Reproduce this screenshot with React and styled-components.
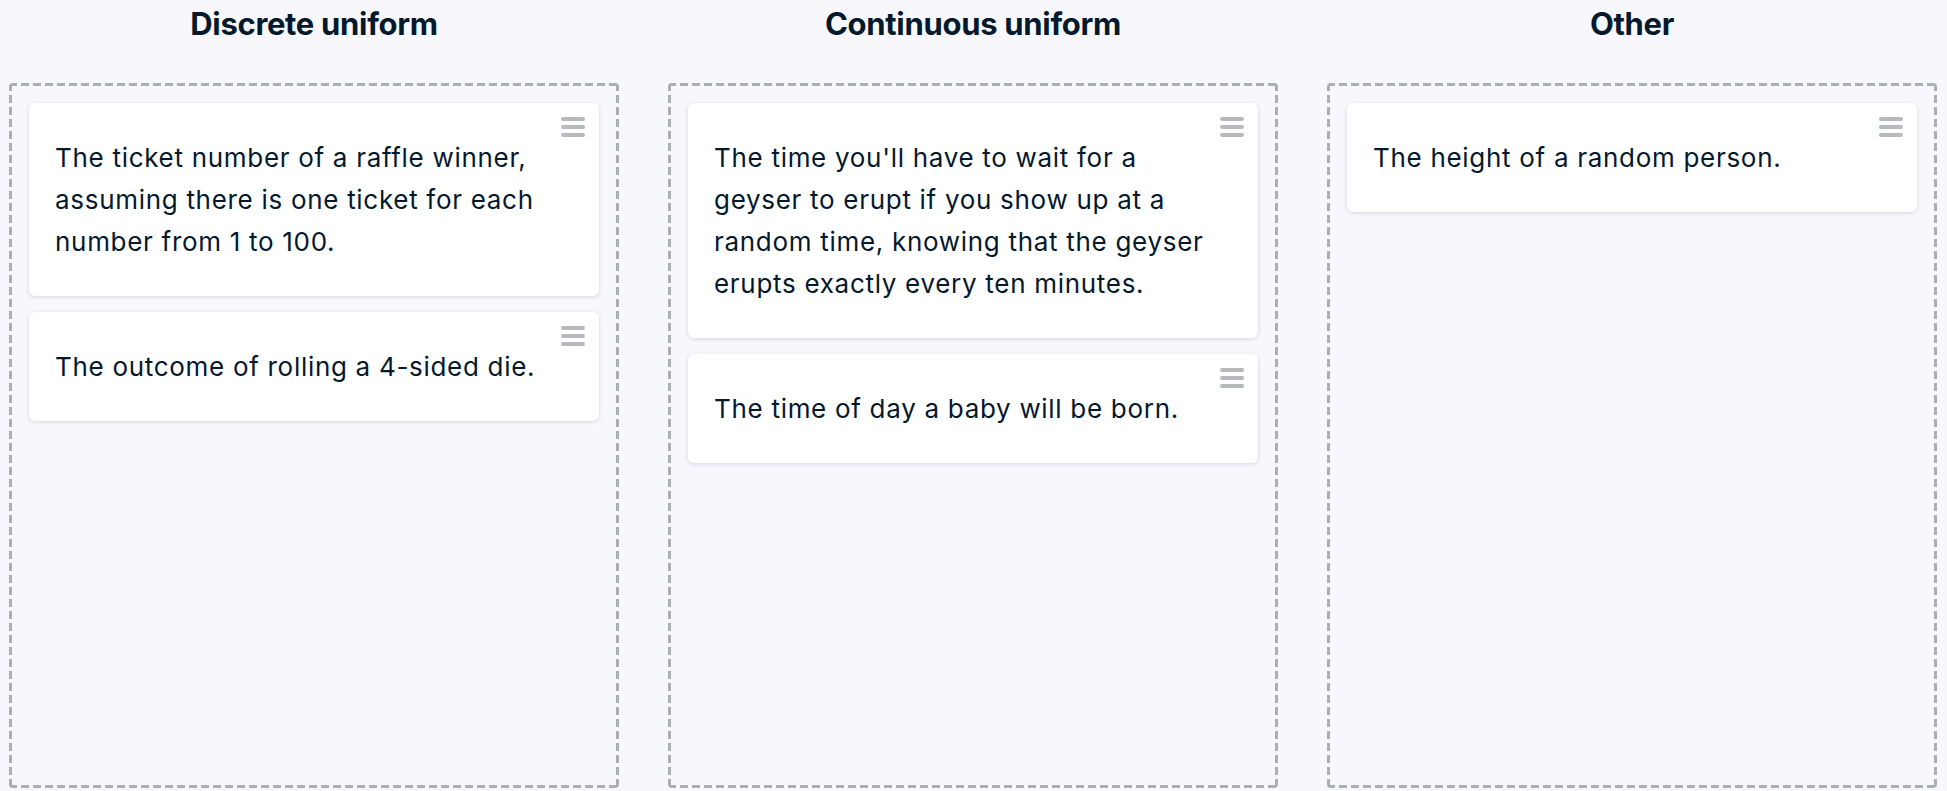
import React from "react";
import styled, { createGlobalStyle } from "styled-components";

const GlobalStyle = createGlobalStyle`
  html, body {
    margin: 0;
    padding: 0;
    background: #f7f7fc;
  }
  body {
    font-family: Inter, "Noto Sans", "Liberation Sans", sans-serif;
    color: #05192d;
  }
  * { box-sizing: border-box; }
`;

const dash = "#abaeb6";

const Board = styled.div`
  display: grid;
  grid-template-columns: repeat(3, 1fr);
  column-gap: 49px;
  padding: 0 10px 0 9px;
`;

const Column = styled.section`
  display: flex;
  flex-direction: column;
`;

const Title = styled.h2`
  margin: 0;
  font-size: 31px;
  line-height: 48px;
  letter-spacing: -0.3px;
  font-weight: 700;
  text-align: center;
  color: #05192d;
`;

const Zone = styled.div`
  margin-top: 35px;
  height: 705px;
  border-radius: 4px;
  padding: 20px;
  display: flex;
  flex-direction: column;
  gap: 16px;
  background:
    linear-gradient(90deg, ${dash} 8px, transparent 8px) top left / 12px 3px repeat-x,
    linear-gradient(90deg, ${dash} 8px, transparent 8px) bottom left / 12px 3px repeat-x,
    linear-gradient(180deg, ${dash} 8px, transparent 8px) top left / 3px 12px repeat-y,
    linear-gradient(180deg, ${dash} 8px, transparent 8px) top right / 3px 12px repeat-y;
`;

const Card = styled.div`
  position: relative;
  background: #ffffff;
  border-radius: 6px;
  box-shadow: 0 1px 4px rgba(5, 25, 45, 0.14);
  padding: 34px 36px 33px 26px;
  font-size: 26px;
  line-height: 42px;
  letter-spacing: 0.7px;
  color: #05192d;
`;

const Handle = styled.div`
  position: absolute;
  top: 14px;
  right: 14px;
  width: 24px;
  height: 20px;
  display: flex;
  flex-direction: column;
  justify-content: space-between;
`;

const Bar = styled.span`
  display: block;
  height: 3.6px;
  border-radius: 2px;
  background: #b6b9be;
`;

const columns = [
  {
    title: "Discrete uniform",
    items: [
      "The ticket number of a raffle winner, assuming there is one ticket for each number from 1 to 100.",
      "The outcome of rolling a 4-sided die.",
    ],
  },
  {
    title: "Continuous uniform",
    items: [
      "The time you'll have to wait for a geyser to erupt if you show up at a random time, knowing that the geyser erupts exactly every ten minutes.",
      "The time of day a baby will be born.",
    ],
  },
  {
    title: "Other",
    items: ["The height of a random person."],
  },
];

export default function App() {
  return (
    <>
      <GlobalStyle />
      <Board>
        {columns.map((col) => (
          <Column key={col.title}>
            <Title>{col.title}</Title>
            <Zone>
              {col.items.map((text) => (
                <Card key={text}>
                  <Handle>
                    <Bar />
                    <Bar />
                    <Bar />
                  </Handle>
                  {text}
                </Card>
              ))}
            </Zone>
          </Column>
        ))}
      </Board>
    </>
  );
}
